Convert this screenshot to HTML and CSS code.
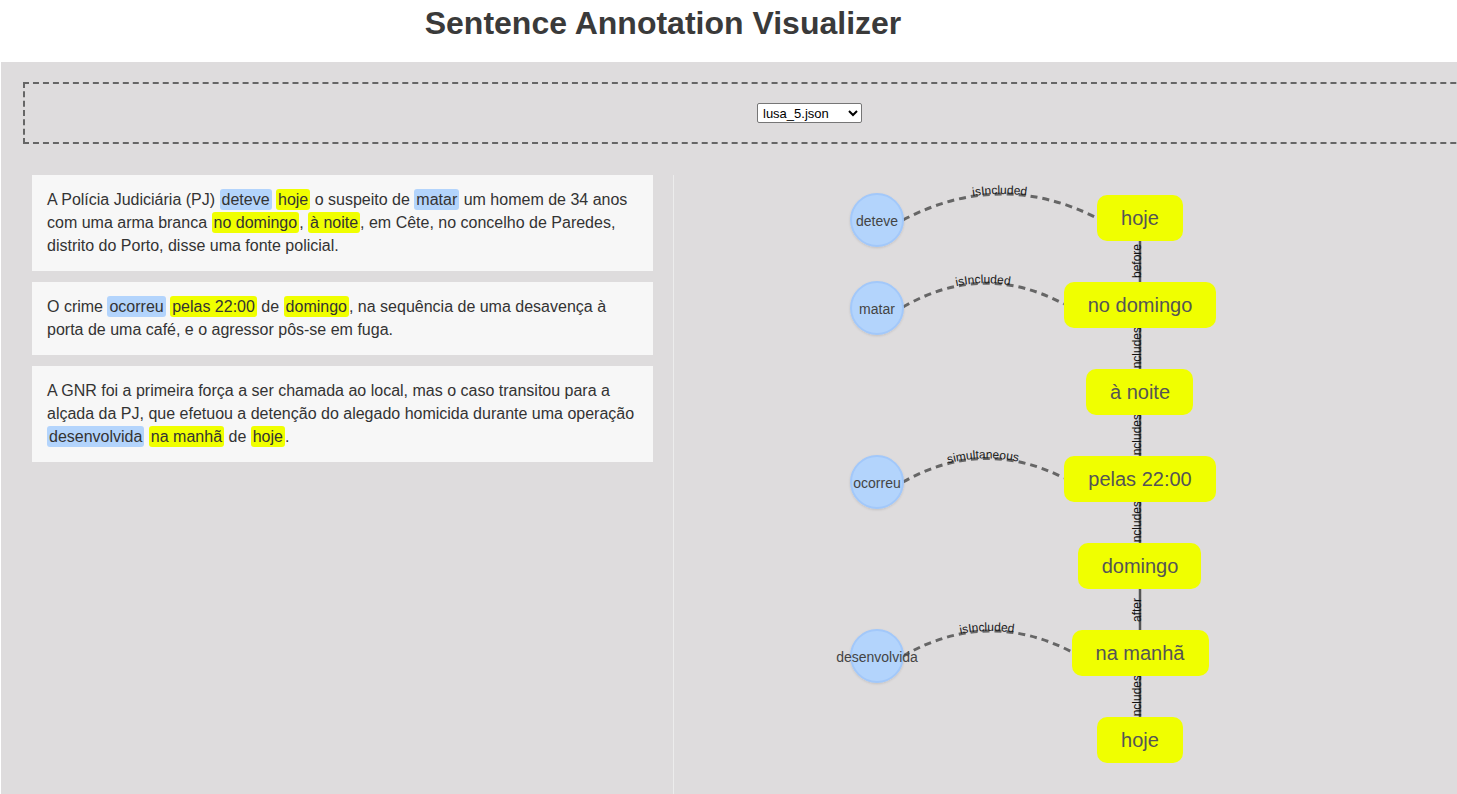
FILE: index.html
```html
<!DOCTYPE html>
<html lang="pt">
<head>
<meta charset="utf-8">
<title>Sentence Annotation Visualizer</title>
<link rel="stylesheet" href="styles.css">
</head>
<body>
<header class="header">
  <h1 class="title">Sentence Annotation Visualizer</h1>
</header>
<main class="main">
  <div class="picker">
    <select class="file-select">
      <option>lusa_5.json</option>
    </select>
  </div>
  <div class="content">
    <section class="sentences">
      <div class="card">A Polícia Judiciária (PJ) <span class="ev">deteve</span> <span class="tx">hoje</span> o suspeito de <span class="ev">matar</span> um homem de 34 anos com uma arma branca <span class="tx">no domingo</span>, <span class="tx">à noite</span>, em Cête, no concelho de Paredes, distrito do Porto, disse uma fonte policial.</div>
      <div class="card">O crime <span class="ev">ocorreu</span> <span class="tx">pelas 22:00</span> de <span class="tx">domingo</span>, na sequência de uma desavença à porta de uma café, e o agressor pôs-se em fuga.</div>
      <div class="card">A GNR foi a primeira força a ser chamada ao local, mas o caso transitou para a alçada da PJ, que efetuou a detenção do alegado homicida durante uma operação <span class="ev">desenvolvida</span> <span class="tx">na manhã</span> de <span class="tx">hoje</span>.</div>
    </section>
    <section class="graph">
      <svg class="graph-svg" width="783" height="619" viewBox="674 175 783 619" xmlns="http://www.w3.org/2000/svg">
        <defs>
          <path id="c1" d="M903,220 Q1000,169 1097,218"/>
          <path id="c2" d="M903,307 Q983,261 1064,304"/>
          <path id="c3" d="M903,482 Q983,437 1064,478"/>
          <path id="c4" d="M903,656 Q987,608 1072,652"/>
          <filter id="sh" x="-20%" y="-20%" width="140%" height="150%">
            <feDropShadow dx="0" dy="1" stdDeviation="1" flood-color="#000" flood-opacity="0.12"/>
          </filter>
        </defs>

        <line class="spine" x1="1140" y1="230" x2="1140" y2="730"/>
        <text class="vlabel" transform="translate(1141,261) rotate(-90)">before</text>
        <text class="vlabel" transform="translate(1141,349) rotate(-90)">includes</text>
        <text class="vlabel" transform="translate(1141,436) rotate(-90)">includes</text>
        <text class="vlabel" transform="translate(1141,523) rotate(-90)">includes</text>
        <text class="vlabel" transform="translate(1141,610) rotate(-90)">after</text>
        <text class="vlabel" transform="translate(1141,697) rotate(-90)">includes</text>

        <use href="#c1" class="dash"/>
        <use href="#c2" class="dash"/>
        <use href="#c3" class="dash"/>
        <use href="#c4" class="dash"/>
        <text class="clabel"><textPath href="#c1" startOffset="50%">isIncluded</textPath></text>
        <text class="clabel"><textPath href="#c2" startOffset="50%">isIncluded</textPath></text>
        <text class="clabel"><textPath href="#c3" startOffset="50%">simultaneous</textPath></text>
        <text class="clabel"><textPath href="#c4" startOffset="50%">isIncluded</textPath></text>

        <g class="tnode">
          <rect x="1097" y="195" width="86" height="46" rx="10"/>
          <text x="1140" y="218">hoje</text>
        </g>
        <g class="tnode">
          <rect x="1064" y="282" width="152" height="46" rx="10"/>
          <text x="1140" y="305">no domingo</text>
        </g>
        <g class="tnode">
          <rect x="1086" y="369" width="107" height="46" rx="10"/>
          <text x="1140" y="392">à noite</text>
        </g>
        <g class="tnode">
          <rect x="1064" y="456" width="152" height="46" rx="10"/>
          <text x="1140" y="479">pelas 22:00</text>
        </g>
        <g class="tnode">
          <rect x="1078" y="543" width="123" height="46" rx="10"/>
          <text x="1140" y="566">domingo</text>
        </g>
        <g class="tnode">
          <rect x="1072" y="630" width="137" height="46" rx="10"/>
          <text x="1140" y="653">na manhã</text>
        </g>
        <g class="tnode">
          <rect x="1097" y="717" width="86" height="46" rx="10"/>
          <text x="1140" y="740">hoje</text>
        </g>

        <g class="enode">
          <circle cx="877" cy="220" r="26" filter="url(#sh)"/>
          <text x="877" y="221">deteve</text>
        </g>
        <g class="enode">
          <circle cx="877" cy="308" r="26" filter="url(#sh)"/>
          <text x="877" y="309">matar</text>
        </g>
        <g class="enode">
          <circle cx="877" cy="482" r="26" filter="url(#sh)"/>
          <text x="877" y="483">ocorreu</text>
        </g>
        <g class="enode">
          <circle cx="877" cy="656" r="26" filter="url(#sh)"/>
          <text x="877" y="657">desenvolvida</text>
        </g>
      </svg>
    </section>
  </div>
</main>
</body>
</html>
```

FILE: styles.css
```css
html, body {
  margin: 0;
  padding: 0;
  height: 100%;
  overflow: hidden;
  background: #ffffff;
}

body {
  font-family: "Liberation Sans", Arial, sans-serif;
  color: #333333;
  display: flex;
  flex-direction: column;
}

.header {
  height: 62px;
  flex: none;
  background: #ffffff;
}

.title {
  margin: 0;
  padding-top: 5px;
  width: 1326px;
  text-align: center;
  font-size: 32px;
  font-weight: bold;
  color: #3a3a3a;
  line-height: 37px;
}

.main {
  flex: 1;
  margin-left: 1px;
  background: #dedcdd;
  padding: 20px 0 0 22px;
  overflow: hidden;
  min-width: 0;
}

.picker {
  width: 1569px;
  height: 58px;
  box-sizing: content-box;
  border: 2px dashed #666666;
  display: flex;
  align-items: center;
  justify-content: center;
}

.file-select {
  width: 105px;
  height: 20px;
  font-family: "Liberation Sans", Arial, sans-serif;
  font-size: 13px;
  color: #000000;
  background: #ffffff;
  border: 1px solid #767676;
  border-radius: 2px;
  padding: 0 0 0 1px;
}

.content {
  display: flex;
  margin-top: 31px;
  height: 700px;
}

.sentences {
  width: 621px;
  padding: 0 20px 0 9px;
  flex: none;
  border-right: 1px solid #ececec;
  display: flex;
  flex-direction: column;
  gap: 11px;
}

.card {
  background: #f7f7f7;
  padding: 13px 15px 14px;
  font-size: 16px;
  line-height: 23px;
  color: #333333;
}

.ev,
.tx {
  padding: 2px 2px;
  border-radius: 3px;
}

.ev {
  background: #b3d4fc;
}

.tx {
  background: #f0ff00;
}

.graph {
  flex: none;
  width: 783px;
}

.graph-svg {
  display: block;
}

.spine {
  stroke: #555555;
  stroke-width: 2.5;
}

.vlabel {
  font-family: "Liberation Sans", Arial, sans-serif;
  font-size: 12px;
  fill: #111111;
  text-anchor: middle;
}

.dash {
  fill: none;
  stroke: #666666;
  stroke-width: 3;
  stroke-dasharray: 7 5;
}

.clabel {
  font-family: "Liberation Sans", Arial, sans-serif;
  font-size: 12px;
  fill: #1a1a1a;
  text-anchor: middle;
}

.tnode rect {
  fill: #f0ff00;
}

.tnode text {
  font-family: "Liberation Sans", Arial, sans-serif;
  font-size: 20px;
  fill: #555555;
  text-anchor: middle;
  dominant-baseline: central;
}

.enode circle {
  fill: #b3d4fc;
  stroke: #a2c8fa;
  stroke-width: 2;
}

.enode text {
  font-family: "Liberation Sans", Arial, sans-serif;
  font-size: 14px;
  fill: #444444;
  text-anchor: middle;
  dominant-baseline: central;
}
```
